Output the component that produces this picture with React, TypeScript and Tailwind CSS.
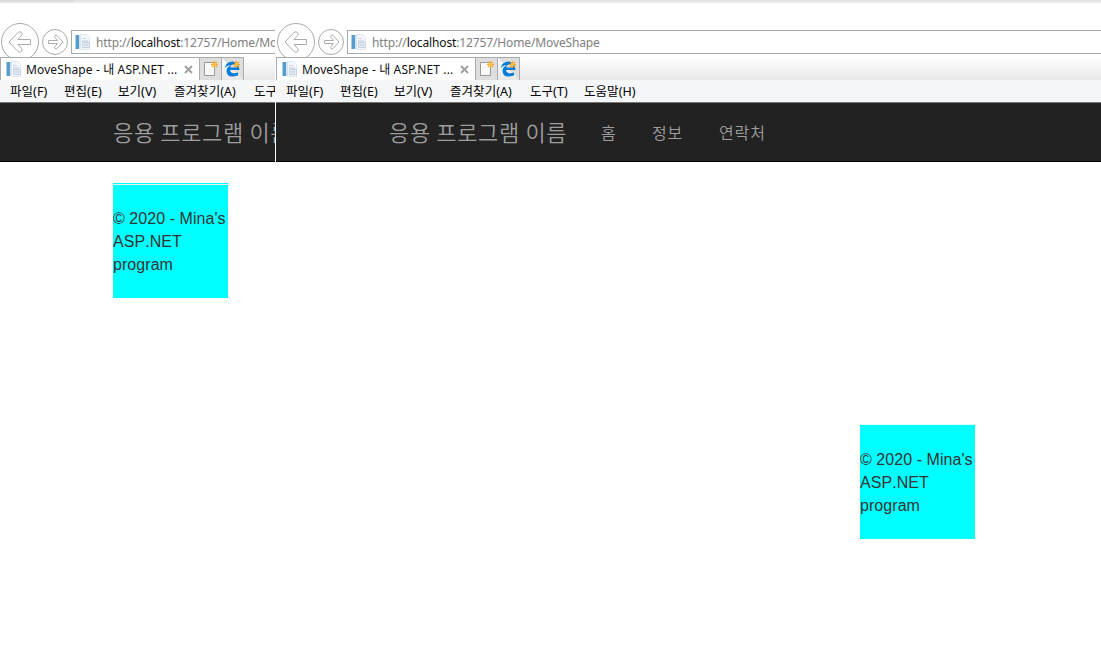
import type { ReactNode } from "react";

function PageIcon() {
  return (
    <svg className="h-4 w-4 shrink-0" viewBox="0 0 16 16">
      <path d="M5.500 .5h6l3 3v12h-9z" fill="#f4f7fb" stroke="#e1e6ed" />
      <path d="M.5 1h3.500v14h-3.500z" fill="#549dcc" />
      <path d="M4 1h1.500v14h-1.500z" fill="#cfe3f1" />
      <path d="M7 4.500h4" stroke="#cbd4e2" />
      <path d="M7 7h6" stroke="#bac6d7" />
      <path d="M7.500 8.500h7v5h-7z" fill="#e7edf5" stroke="#c5d0df" />
      <path d="M9 11h4" stroke="#b9c6d8" />
    </svg>
  );
}

function Star({ x, y }: { x: number; y: number }) {
  return (
    <g transform={`translate(${x} ${y})`} stroke="#f3a11d" strokeWidth="1.100">
      <path d="M0-3.500V3.500M-3.500 0H3.500M-2.500-2.500 2.500 2.500M2.500-2.500-2.500 2.500" />
      <circle r="1.700" fill="#ffc34b" stroke="none" />
    </g>
  );
}

function Item({ w, children }: { w: string; children: ReactNode }) {
  return <span className={`${w} shrink-0 whitespace-nowrap`}>{children}</span>;
}

function Browser({ full = false }: { full?: boolean }) {
  return (
    <div className="w-full overflow-hidden font-['Noto_Sans','Noto_Sans_CJK_KR',sans-serif]">
      <div className="flex h-[54px] overflow-hidden pt-[20px]">
        <svg className="h-[39px] w-[71px] shrink-0" viewBox="0 0 71 39" fill="none" stroke="#aaa" strokeWidth="1">
          <circle cx="20" cy="19" r="18.500" />
          <path d="M9 19 18 9.500Q20 8 21.500 9.500Q23 11 21.500 12.500L18 16.500H30.500V21.500H18L21.500 25.500Q23 27 21.500 28.500Q20 30 18 28.500Z" />
          <circle cx="55" cy="19" r="12.500" />
          <path d="M63 19 57 12.500Q56 11.500 55 12.500Q54 13.500 55 14.500L57.500 17.500H48.500V20.500H57.500L55 23.500Q54 24.500 55 25.500Q56 26.500 57 25.500Z" />
        </svg>
        <div className="mt-[7px] flex h-[24px] min-w-0 grow items-center border border-r-0 border-[#a9a9a9] bg-white pl-[3px]">
          <PageIcon />
          <span className="ml-[5px] mt-px whitespace-nowrap text-[12px] tracking-[-0.130px] text-[#808080]">
            http://<span className="text-[#111]">localhost</span>:12757/Home/MoveShape
          </span>
        </div>
      </div>
      <div className="flex h-[23px] overflow-hidden bg-gradient-to-b from-white to-[#e8e8e8]">
        <div className="flex w-[199px] shrink-0 items-center border-t border-l border-[#aaa] bg-white pl-[5px]">
          <PageIcon />
          <span className="ml-[4px] mt-px w-[158px] whitespace-nowrap text-[12px] tracking-[0.120px] text-[#111]">MoveShape - 내 ASP.NET ...</span>
          <svg className="h-[9px] w-[9px] shrink-0" viewBox="0 0 9 9" stroke="#a0a0a0" strokeWidth="2"><path d="m1 1 7 7M8 1 1 8" /></svg>
        </div>
        <svg className="h-[23px] w-[45px] shrink-0" viewBox="0 0 45 23">
          <path d="M.5 23V.5h22V23M22.500 .5h22V23" fill="#dedede" stroke="#ababab" />
          <path d="M5.500 5.500h10v13h-10z" fill="#f9f9f9" stroke="#999" />
          <Star x={15.500} y={7.500} />
          <path d="M25.500 11.500Q27 4.500 34 4.500Q40.500 5 40.500 13H31Q32 18 39 15.500V18.500Q28 22 27.500 14Q27.500 10 32 8Q28 8 25.500 11.500ZM31.200 10.500H37Q36.500 7.500 34 7.500Q31.600 7.700 31.200 10.500Z" fill="#007bd8" fillRule="evenodd" />
          <Star x={37.500} y={7.500} />
        </svg>
      </div>
      <div className="flex h-[22px] items-center overflow-hidden bg-[#f5f6f7] pl-[10px] pt-[2px] text-[12.5px] tracking-[0.050px] text-black">
        <Item w="w-[54px]">파일(F)</Item>
        <Item w="w-[54px]">편집(E)</Item>
        <Item w="w-[56px]">보기(V)</Item>
        <Item w="w-[80px]">즐겨찾기(A)</Item>
        <Item w="w-[54px]">도구(T)</Item>
        {full && <Item w="w-[60px]">도움말(H)</Item>}
      </div>
      <div className="flex h-[60px] items-center overflow-hidden border-t border-b border-t-[#777] border-b-black bg-[#222] pl-[113px] font-['Noto_Sans_CJK_KR',sans-serif] font-[350] text-[#9d9d9d]">
        <span className="mb-[2px] w-[212px] shrink-0 whitespace-nowrap text-[22px] tracking-[0.650px]">응용 프로그램 이름</span>
        {full && (
          <div className="flex whitespace-nowrap text-[16px] tracking-[0.900px]">
            <Item w="w-[51px]">홈</Item>
            <Item w="w-[67px]">정보</Item>
            <Item w="w-[60px]">연락처</Item>
          </div>
        )}
      </div>
    </div>
  );
}

function Shape() {
  return (
    <div className="h-[113px] w-[115px] whitespace-nowrap bg-[#0ff] pt-[22px] font-['Liberation_Sans',sans-serif] text-[16px] leading-[23px] tracking-[0.060px] text-[#333] [font-kerning:none]">
      © 2020 - Mina's<br />ASP.NET<br />program
    </div>
  );
}

export default function App() {
  return (
    <main className="h-[654px] w-[1101px] overflow-hidden bg-white">
      <div className="flex h-[3px] bg-gradient-to-b from-[#e2e2e2] to-[#ededed]">
        <div className="w-[74px] bg-gradient-to-b from-[#d4d4d4] to-[#e8e8e8]" />
      </div>
      <div className="flex">
        <section className="w-[275px] shrink-0">
          <Browser />
          <div className="ml-[113px] mt-[21px] w-[115px]">
            <div className="h-px bg-[#0ff]" />
            <div className="h-px bg-[#eee]" />
            <Shape />
          </div>
        </section>
        <section className="ml-px w-[825px] shrink-0">
          <Browser full />
          <div className="ml-[584px] mt-[262px] w-[115px]">
            <div className="h-px bg-[#dff]" />
            <div className="h-px bg-[#0ff]" />
            <Shape />
          </div>
        </section>
      </div>
    </main>
  );
}
